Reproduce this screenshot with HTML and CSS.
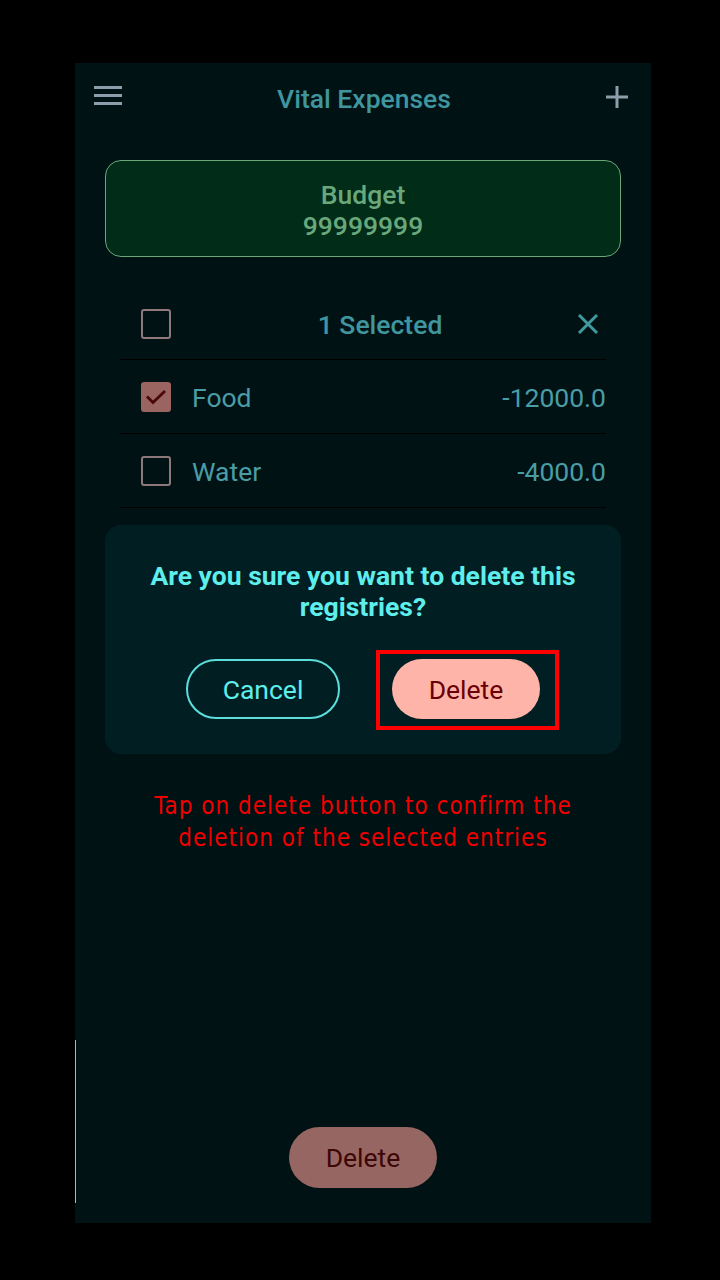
FILE: index.html
```html
<!DOCTYPE html>
<html>
<head>
<meta charset="utf-8">
<link rel="stylesheet" href="styles.css">
</head>
<body>
<div class="screen">
  <div class="edge-line"></div>
  <header class="topbar">
    <svg class="icon-menu" width="28" height="22" viewBox="0 0 28 22"><rect x="0" y="2" width="28" height="3" fill="#8d9eaa"/><rect x="0" y="10" width="28" height="3" fill="#8d9eaa"/><rect x="0" y="18" width="28" height="3" fill="#8d9eaa"/></svg>
    <div class="title">Vital Expenses</div>
    <svg class="icon-plus" width="22" height="22" viewBox="0 0 22 22"><rect x="0" y="9.5" width="22" height="3" fill="#8d9eaa"/><rect x="9.5" y="0" width="3" height="22" fill="#8d9eaa"/></svg>
  </header>

  <section class="budget">
    <div class="budget-label">Budget</div>
    <div class="budget-value">99999999</div>
  </section>

  <div class="list">
    <div class="row header-row">
      <span class="checkbox"></span>
      <span class="selected">1 Selected</span>
      <svg class="icon-close" width="22" height="22" viewBox="0 0 22 22"><path d="M2 2 L20 20 M20 2 L2 20" stroke="#3f9aa0" stroke-width="3" fill="none"/></svg>
    </div>
    <div class="row">
      <span class="checkbox checked"><svg width="28" height="28" viewBox="0 0 28 28"><path d="M5 13.5 L11 19.5 L23 8" stroke="#4a0808" stroke-width="2.8" fill="none"/></svg></span>
      <span class="name">Food</span>
      <span class="amount">-12000.0</span>
    </div>
    <div class="row">
      <span class="checkbox"></span>
      <span class="name">Water</span>
      <span class="amount">-4000.0</span>
    </div>
  </div>

  <div class="dialog">
    <p class="dialog-text">Are you sure you want to delete this registries?</p>
    <div class="dialog-actions">
      <button class="btn btn-cancel">Cancel</button>
      <div class="highlight-wrap">
        <button class="btn btn-delete">Delete</button>
        <span class="highlight"></span>
      </div>
    </div>
  </div>

  <p class="hint">Tap on delete button to confirm the<br>deletion of the selected entries</p>

  <button class="btn btn-bottom">Delete</button>
</div>
</body>
</html>
```

FILE: styles.css
```css
* { box-sizing: border-box; }
html, body { margin: 0; padding: 0; background: #000; }
body { width: 720px; height: 1280px; overflow: hidden; font-family: Roboto, "Noto Sans", sans-serif; }

.screen {
  position: relative;
  margin: 63px 0 0 75px;
  width: 576px;
  height: 1160px;
  background: #011215;
  display: flex;
  flex-direction: column;
  align-items: center;
}

.edge-line {
  position: absolute;
  left: 0;
  top: 977px;
  width: 1px;
  height: 163px;
  background: #c9aaa5;
}

.topbar {
  width: 100%;
  height: 68px;
  display: flex;
  align-items: center;
  padding: 0 23px 0 19px;
}
.icon-menu { display: block; margin-top: -4px; }
.icon-plus { display: block; margin-top: 0; }
.title {
  flex: 1;
  text-align: center;
  font-size: 26.5px;
  font-weight: 500;
  color: #3f969e;
  margin-top: 3px;
}

.budget {
  margin-top: 29px;
  width: 516px;
  height: 97px;
  border: 1.5px solid #69a877;
  border-radius: 16px;
  background: #002c18;
  display: flex;
  flex-direction: column;
  align-items: center;
  justify-content: center;
  color: #6aa87b;
  font-size: 26.5px;
  font-weight: 500;
  line-height: 31px;
  padding-top: 2px;
}

.list {
  margin-top: 30px;
  width: 486px;
}
.row {
  height: 74px;
  border-bottom: 1.5px solid #000;
  display: flex;
  align-items: center;
  padding-left: 21px;
  color: #4a9da5;
  font-size: 26.5px;
}
.header-row { height: 73px; padding-right: 7px; padding-top: 2px; }
.checkbox {
  width: 30px;
  height: 30px;
  border: 2.5px solid #8d7979;
  border-radius: 3px;
  flex: none;
  display: flex;
  align-items: center;
  justify-content: center;
}
.checkbox.checked { background: #9a6460; border-color: #9a6460; }
.checkbox svg { display: block; flex: none; }
.selected {
  flex: 1;
  text-align: center;
  font-weight: 500;
  color: #3f969e;
  padding-left: 12px;
}
.icon-close { display: block; }
.name { margin-left: 21px; flex: 1; padding-top: 2px; }
.amount { text-align: right; padding-top: 2px; }

.dialog {
  margin-top: 17px;
  width: 516px;
  height: 229px;
  border-radius: 16px;
  background: #011f22;
  display: flex;
  flex-direction: column;
  align-items: center;
  padding-top: 35px;
}
.dialog-text {
  margin: 0;
  width: 460px;
  text-align: center;
  font-size: 26.5px;
  font-weight: 700;
  line-height: 31px;
  color: #5eeeec;
}
.dialog-actions {
  margin-top: 37px;
  display: flex;
  gap: 52px;
  align-items: center;
}
.btn {
  font-family: Roboto, "Noto Sans", sans-serif;
  font-size: 26.5px;
  height: 60px;
  border-radius: 30px;
  padding: 0;
  cursor: pointer;
}
.btn-cancel {
  width: 154px;
  background: transparent;
  border: 2px solid #5cdedd;
  color: #5eeeec;
}
.highlight-wrap { position: relative; }
.btn-delete {
  display: block;
  width: 148px;
  background: #ffb4a9;
  border: none;
  color: #690005;
}
.highlight {
  position: absolute;
  left: -16px;
  top: -9px;
  width: 183px;
  height: 80px;
  border: 4px solid #ff0000;
}

.hint {
  margin: 36px 0 0;
  text-align: center;
  font-family: "DejaVu Sans Condensed", "DejaVu Sans", sans-serif;
  font-size: 24px;
  letter-spacing: 1px;
  line-height: 32px;
  color: #ee0000;
}

.btn-bottom {
  margin-top: auto;
  margin-bottom: 35px;
  width: 148px;
  height: 61px;
  border-radius: 31px;
  border: none;
  background: #966662;
  color: #3d0707;
}
```
